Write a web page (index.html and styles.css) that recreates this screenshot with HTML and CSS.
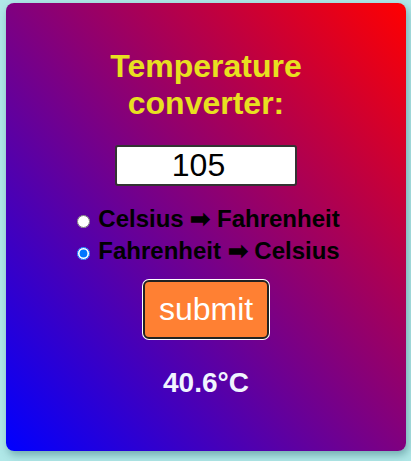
FILE: index.html
```html
<!DOCTYPE html>
<html lang="en">
<head>
<meta charset="utf-8">
<title>Temperature converter</title>
<link rel="stylesheet" href="styles.css">
</head>
<body>
<main class="card">
  <h1 class="title">Temperature<br>converter:</h1>
  <input class="temp-input" type="text" value="105">
  <div class="options">
    <label class="option"><input type="radio" name="mode" class="radio">Celsius ➡ Fahrenheit</label>
    <label class="option"><input type="radio" name="mode" class="radio" checked>Fahrenheit ➡ Celsius</label>
  </div>
  <button class="submit" type="button">submit</button>
  <p class="result">40.6°C</p>
</main>
</body>
</html>
```

FILE: styles.css
```css
html, body {
  margin: 0;
  padding: 0;
}

body {
  background: #b0e8e8;
  padding: 3px 0 0 6px;
  font-family: "Liberation Sans", Arial, sans-serif;
  height: 461px;
  box-sizing: border-box;
}

.card {
  width: 400px;
  height: 448px;
  box-sizing: border-box;
  border-radius: 8px;
  background: linear-gradient(to top right, #0000ff, #ff0000);
  box-shadow: 2px 4px 8px rgba(0, 60, 70, 0.35);
  display: flex;
  flex-direction: column;
  align-items: center;
}

.title {
  margin: 45px 0 0;
  font-size: 32px;
  font-weight: bold;
  line-height: normal;
  color: #e8e020;
  text-align: center;
}

.temp-input {
  margin-top: 23px;
  width: 182px;
  box-sizing: border-box;
  border: 2px solid #333;
  border-radius: 3px;
  padding: 0 17px 0 2px;
  font-family: "Liberation Sans", Arial, sans-serif;
  font-size: 32px;
  line-height: normal;
  text-align: center;
  color: #000;
  background: #fff;
}

.options {
  margin-top: 17px;
  display: flex;
  flex-direction: column;
  align-items: flex-start;
}

.option {
  font-size: 24px;
  font-weight: bold;
  line-height: 32px;
  color: #000;
  white-space: nowrap;
}

.radio {
  margin: 3px 8px 0 5px;
  position: relative;
  top: 1px;
}

.submit {
  margin-top: 13px;
  font-family: "Liberation Sans", Arial, sans-serif;
  font-size: 32px;
  line-height: normal;
  color: #fff;
  background: #ff8033;
  border: 2px solid #222;
  border-radius: 6px;
  box-shadow: 0 0 0 1px #fff;
  padding: 9px 14px;
}

.result {
  margin: 28px 0 0;
  font-size: 28px;
  font-weight: bold;
  line-height: normal;
  color: #f0f4ff;
}
```
